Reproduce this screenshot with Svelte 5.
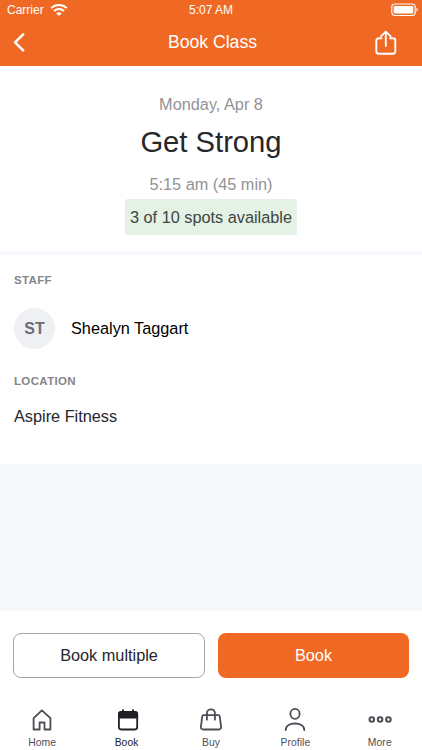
<script lang="ts">
  const booking = {
    date: 'Monday, Apr 8',
    name: 'Get Strong',
    time: '5:15 am (45 min)',
    spots: '3 of 10 spots available',
    initials: 'ST',
    instructor: 'Shealyn Taggart',
    location: 'Aspire Fitness',
  };

  const tabs: string[] = ['Home', 'Book', 'Buy', 'Profile', 'More'];
  let activeTab = 'Book';
</script>

<div class="screen">
  <header>
    <div class="status-bar">
      <div class="carrier">
        <span>Carrier</span>
        <svg width="18" height="14" viewBox="0 0 18 14" fill="none" stroke="#fff" stroke-width="2">
          <path d="M1.2 5.1C5.6 .9 12.4 .9 16.8 5.1" />
          <path d="M4 8.1c2.8-2.7 7.2-2.7 10 0" />
          <path d="M6.3 10.4c1.5-1.5 3.9-1.5 5.4 0L9 13.1z" fill="#fff" stroke="none" />
        </svg>
      </div>
      <span class="clock">5:07 AM</span>
      <svg class="battery" width="28" height="14" viewBox="0 0 28 14" fill="none">
        <rect x=".8" y="1" width="23.4" height="11.5" rx="3" stroke="#fff" stroke-width="1.1" />
        <rect x="2.7" y="2.9" width="19.6" height="7.7" rx="1.4" fill="#fff" />
        <path d="M25.5 4.8c1.8.6 1.8 3.4 0 4z" fill="#fff" />
      </svg>
    </div>
    <div class="title-bar">
      <button class="icon-button" aria-label="Back">
        <svg width="14" height="22" viewBox="0 0 14 22" fill="none" stroke="#fff" stroke-width="2.5" stroke-linecap="round" stroke-linejoin="round">
          <path d="M11.2 2.4L3 10.400l8.200 8" />
        </svg>
      </button>
      <h1>Book Class</h1>
      <button class="icon-button share" aria-label="Share">
        <svg width="24" height="26" viewBox="0 0 24 26" fill="none" stroke="#fff" stroke-width="1.9" stroke-linecap="round" stroke-linejoin="round">
          <path d="M7.5 8.3H4.7c-1.3 0-2.4 1.1-2.4 2.4v10.6c0 1.3 1.1 2.4 2.4 2.4h14.2c1.3 0 2.4-1.1 2.4-2.4V10.700c0-1.300-1.100-2.400-2.400-2.400h-2.800" />
          <path d="M11.800 16V1.800M7.100 6.100l4.700-4.500 4.700 4.500" />
        </svg>
      </button>
    </div>
  </header>

  <section class="summary">
    <p class="muted">{booking.date}</p>
    <h2>{booking.name}</h2>
    <p class="muted time">{booking.time}</p>
    <span class="spots">{booking.spots}</span>
  </section>

  <section class="details">
    <h3>STAFF</h3>
    <div class="staff">
      <div class="avatar">{booking.initials}</div>
      <span>{booking.instructor}</span>
    </div>
    <h3>LOCATION</h3>
    <p class="location">{booking.location}</p>
  </section>

  <div class="actions">
    <button class="multiple">Book multiple</button>
    <button class="book">Book</button>
  </div>

  <nav>
    {#each tabs as tab}
      <button class="tab" class:active={tab === activeTab} on:click={() => (activeTab = tab)}>
        <svg width="26" height="26" viewBox="0 0 26 26" fill="none" stroke="currentColor" stroke-width="1.8" stroke-linecap="round" stroke-linejoin="round">
          {#if tab === 'Home'}
            <path d="M4.600 11.200L12.900 3.300l8.500 7.900v11.300h-5.900v-7h-4.900v7H4.600z" />
          {:else if tab === 'Book'}
            <path d="M9 3.200v2.500M19 3.200v2.500" stroke-width="2" />
            <rect x="4.900" y="5" width="18.300" height="17.500" rx="2.400" />
            <path d="M4 11.500V7.200A3 3 0 0 1 7 4.200h14.100a3 3 0 0 1 3 3v4.300z" fill="currentColor" stroke="none" />
          {:else if tab === 'Buy'}
            <path d="M5.500 8.200h15c.7 0 1.100.400 1.200 1l1.400 10.700c.2 1.500-.8 2.600-2.300 2.600H5.200c-1.500 0-2.500-1.100-2.300-2.600L4.300 9.200c.1-.6.500-1 1.200-1z" />
            <path d="M8.900 12.700V6.500c0-5.400 8-5.400 8 0v6.200" />
          {:else if tab === 'Profile'}
            <ellipse cx="13" cy="6.900" rx="4.600" ry="5" />
            <path d="M3.700 23c0-8.700 18.600-8.700 18.600 0" />
          {:else}
            <g stroke-width="2">
              <circle cx="4.800" cy="12.500" r="2.300" />
              <circle cx="13.100" cy="12.500" r="2.300" />
              <circle cx="21.400" cy="12.500" r="2.300" />
            </g>
          {/if}
        </svg>
        <span>{tab}</span>
      </button>
    {/each}
  </nav>
</div>

<style>
  .screen {
    width: 422px;
    height: 750px;
    display: flex;
    flex-direction: column;
    overflow: hidden;
    background-color: #f7f8fb;
    color: #26262b;
    font-family: "Liberation Sans", Arial, sans-serif;
    font-size: 16.3px;
  }

  h1, h2, h3, p {
    margin: 0;
    font-weight: normal;
  }

  button {
    padding: 0;
    border: none;
    background: none;
    color: inherit;
    font: inherit;
  }

  svg {
    display: block;
  }

  header {
    height: 66px;
    flex-shrink: 0;
    background-color: #f06924;
    color: #fff;
  }

  .status-bar {
    display: grid;
    grid-template-columns: 1fr auto 1fr;
    align-items: center;
    height: 19px;
    padding: 0 3px 0 7px;
    font-size: 12px;
  }

  .clock {
    margin-right: 4px;
  }

  .carrier {
    display: flex;
    align-items: center;
    gap: 6px;
  }

  .battery {
    justify-self: end;
  }

  .title-bar {
    display: grid;
    grid-template-columns: 40px 1fr 36px;
    align-items: center;
    height: 47px;
    padding: 0 24px 0 12px;
  }

  .title-bar h1 {
    padding-left: 11px;
    text-align: center;
    font-size: 17.6px;
  }

  .share {
    justify-self: end;
  }

  .summary {
    display: flex;
    flex-direction: column;
    align-items: center;
    height: 185px;
    box-sizing: border-box;
    padding-top: 28px;
    background-color: #fff;
  }

  .muted {
    line-height: 20px;
    color: #929296;
  }

  h2 {
    margin-top: 10px;
    font-size: 29.2px;
    line-height: 36px;
  }

  .time {
    margin-top: 14px;
  }

  .spots {
    margin-top: 5px;
    padding: 0 5px;
    border-radius: 3px;
    line-height: 36px;
    background-color: #e3f2e4;
    color: #3e4542;
  }

  .details {
    height: 209px;
    box-sizing: border-box;
    margin-top: 4px;
    padding: 18px 14px 0;
    background-color: #fff;
  }

  h3 {
    font-size: 11.5px;
    font-weight: bold;
    line-height: 14px;
    letter-spacing: 0.35px;
    color: #85858a;
  }

  .staff {
    display: flex;
    align-items: center;
    gap: 16px;
    margin: 21px 0 25px;
    color: #000;
  }

  .avatar {
    width: 41px;
    height: 41px;
    border-radius: 50%;
    background-color: #eff0f3;
    color: #6b6d76;
    font-size: 16px;
    font-weight: bold;
    line-height: 41px;
    text-align: center;
  }

  .location {
    margin-top: 18px;
    line-height: 20px;
  }

  .actions {
    display: grid;
    grid-template-columns: 192px 191px;
    gap: 13px;
    height: 90px;
    box-sizing: border-box;
    margin-top: auto;
    padding: 22px 13px;
    background-color: #fff;
  }

  .actions button {
    height: 45px;
    border-radius: 8px;
  }

  .actions .multiple {
    border: 1px solid #a5a5a9;
  }

  .actions .book {
    background-color: #f06924;
    color: #fff;
  }

  nav {
    display: grid;
    grid-template-columns: repeat(5, 1fr);
    height: 48px;
    padding-top: 1px;
    background-color: #fff;
    color: #4c4d55;
    font-size: 10.3px;
  }

  .tab {
    display: flex;
    flex-direction: column;
    align-items: center;
    gap: 4px;
    padding-top: 5px;
    line-height: 12px;
    letter-spacing: 0.1px;
  }

  .active {
    color: #202026;
  }
</style>
